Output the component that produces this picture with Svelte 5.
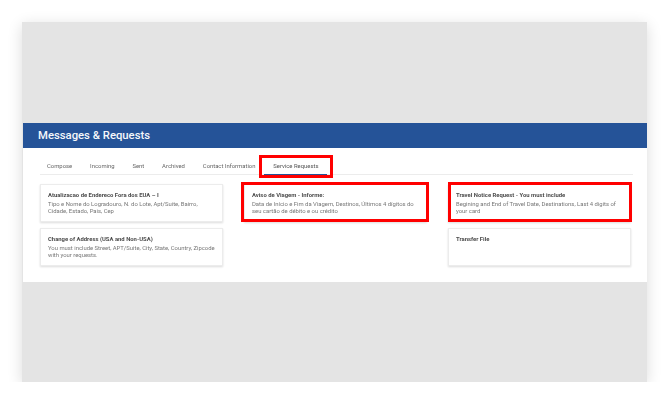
<script>
    const tabs = ["Compose", "Incoming", "Sent", "Archived", "Contact Information", "Service Requests"];
    const activeTab = "Service Requests";
    const cards = [
        { title: "Atualizacao de Endereco Fora dos EUA – I", text: "Tipo e Nome do Logradouro, N. do Lote, Apt/Suite, Bairro, Cidade, Estado, Pais, Cep" },
        { title: "Aviso de Viagem - Informe:", text: "Data de Início e Fim da Viagem, Destinos, Últimos 4 dígitos do seu cartão de débito e ou crédito", marked: "wide" },
        { title: "Travel Notice Request - You must include", text: "Begining and End of Travel Date, Destinations, Last 4 digits of your card", marked: "narrow" },
        { title: "Change of Address (USA and Non-USA)", text: "You must include Street, APT/Suite, City, State, Country, Zipcode with your requests." },
        null,
        { title: "Transfer File", text: "" }
    ];
</script>

<main class="screen">
    <section class="panel">
        <h1 class="banner">Messages &amp; Requests</h1>
        <div class="body">
            <nav class="tabs">
                {#each tabs as tab}
                    <span class="tab" class:active={tab === activeTab}>
                        <span class="label">{tab}</span>
                        {#if tab === activeTab}<i class="mark tabMark"></i>{/if}
                    </span>
                {/each}
            </nav>
            <div class="grid">
                {#each cards as card}
                    {#if card}
                        <div class="card">
                            <h2>{card.title}</h2>
                            <p>{card.text}</p>
                            {#if card.marked}<i class="mark {card.marked}"></i>{/if}
                        </div>
                    {:else}
                        <div></div>
                    {/if}
                {/each}
            </div>
        </div>
    </section>
</main>

<style>
    :global(body) {
        background: #fff;
    }
    .screen {
        width: 625px;
        height: 360px;
        margin: 22px 0 0 22px;
        padding-top: 101px;
        box-sizing: border-box;
        background: #e4e4e4;
        box-shadow: 0 3px 14px rgba(0, 0, 0, 0.14);
        font-family: Roboto, sans-serif;
    }
    .panel {
        height: 159px;
        margin-left: 1px;
        background: #fff;
    }
    .banner {
        height: 25px;
        margin: 0;
        padding-left: 15px;
        background: #255398;
        color: #f4f7fb;
        font-size: 11.3px;
        font-weight: 500;
        line-height: 26px;
    }
    .body {
        padding: 0 14px 0 17px;
    }
    .tabs {
        display: flex;
        height: 26px;
        border-bottom: 1px solid #ececec;
    }
    .tab {
        position: relative;
        padding: 14px 8.95px 0;
        color: #666;
        font-size: 5.9px;
        line-height: 8px;
        white-space: nowrap;
    }
    .label {
        filter: blur(0.3px);
    }
    .tab:first-child {
        padding-left: 7px;
    }
    .tab.active {
        color: #555;
    }
    .tab.active::after {
        content: "";
        position: absolute;
        left: 0;
        right: 0;
        bottom: -1px;
        height: 1px;
        background: #255398;
    }
    .mark {
        position: absolute;
        border: 3px solid #f00;
        pointer-events: none;
    }
    .tabMark {
        inset: 7px -6px -4px -5px;
    }
    .grid {
        display: grid;
        grid-template-columns: repeat(3, 183px);
        grid-auto-rows: 38px;
        gap: 6px 21px;
        margin-top: 9px;
    }
    .card {
        position: relative;
        padding: 7px 7px 0;
        border: 1px solid #ececec;
        background: #fff;
        box-shadow: 0 1px 2px rgba(0, 0, 0, 0.14);
        box-sizing: border-box;
    }
    .card h2 {
        margin: 0 0 2px;
        color: #4c4c4c;
        font-size: 5.9px;
        font-weight: 700;
        line-height: 7px;
        filter: blur(0.3px);
    }
    .card p {
        margin: 0;
        color: #777;
        font-size: 5.9px;
        line-height: 7.2px;
        filter: blur(0.3px);
    }
    .wide {
        inset: -3px -3px -1px -4px;
    }
    .narrow {
        inset: -3px -2px -1px -1px;
    }
</style>
